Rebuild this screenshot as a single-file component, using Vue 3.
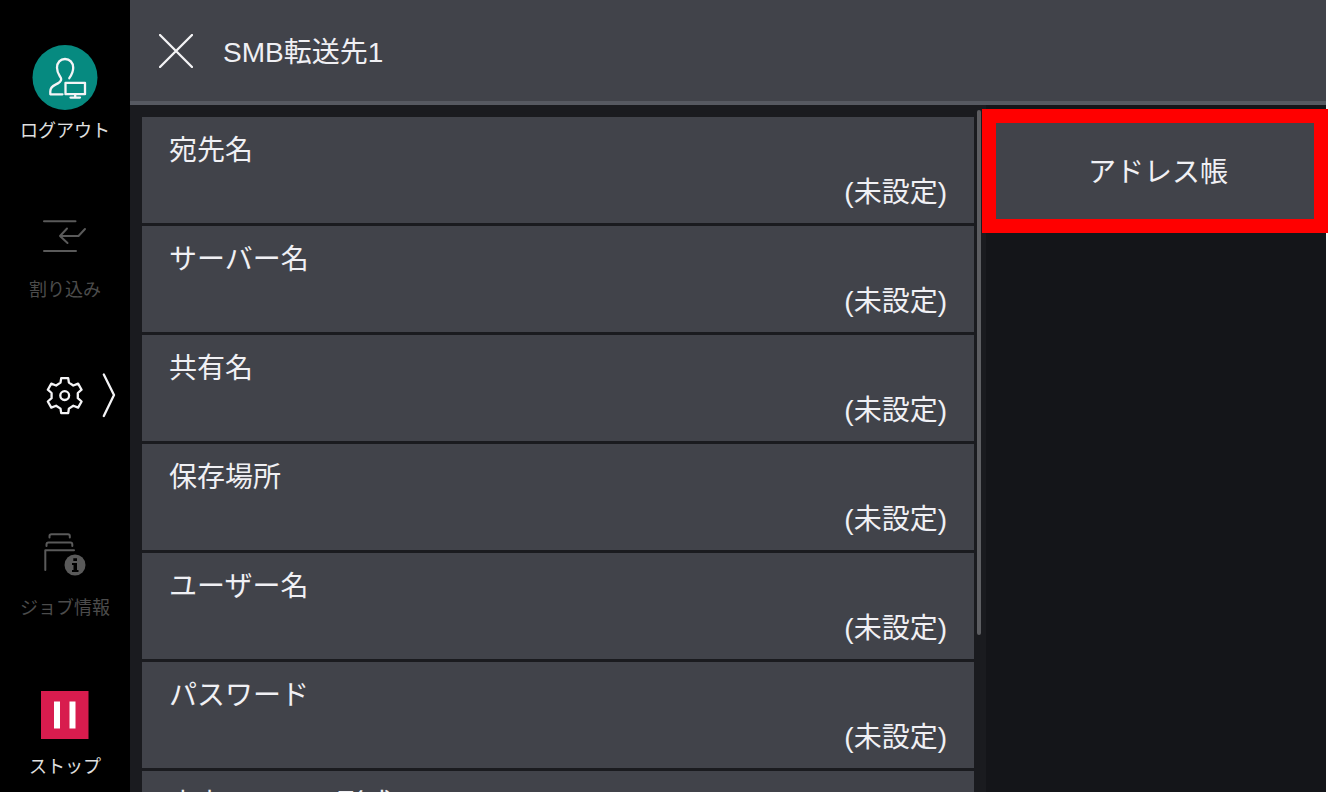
<template>
<div class="screen">
    <nav class="sidebar">
        <button class="side-btn">
            <svg class="side-icon" viewBox="0 0 130 66" aria-hidden="true">
                <circle cx="65" cy="33.5" r="32.5" fill="#068a80" />
                <g class="line bright">
                    <path d="M62.5 50.3H50.3V47.5C50.3 43.8 52 42.2 55.5 40.6C59 39 61.4 37.8 61.2 35C61 32.6 57 30.4 57 23.8C57 18.4 60.4 15 65 15S73.2 18.4 73.2 23.8C73.2 28 71.6 31 69.3 34.2" />
                    <path d="M65.5 38.8H85V50.2H65.5ZM75.2 50.2V53.4M70.5 53.6H80" />
                </g>
            </svg>
            <span>ログアウト</span>
        </button>
        <button class="side-btn" disabled>
            <svg class="side-icon" viewBox="0 0 130 66" aria-hidden="true">
                <path class="line" d="M44 18.3H75.5M44 48H76M85 26L78.5 33H60M67 25.5L60 33L67.5 40" />
            </svg>
            <span>割り込み</span>
        </button>
        <button class="side-btn" aria-label="設定">
            <svg class="side-icon" viewBox="0 0 130 66" aria-hidden="true">
                <g class="line bright" transform="translate(64.7 33.6)">
                    <path d="M-3.5-17.5H3.5L4.2-13L8.6-10.1L13.4-12L16.9-5.9L13.1-2.6V2.6L16.9 5.9L13.4 12L8.6 10.1L4.2 13L3.5 17.5H-3.5L-4.2 13L-8.6 10.1L-13.4 12L-16.9 5.9L-13.1 2.6V-2.6L-16.9-5.9L-13.4-12L-8.6-10.1L-4.2-13Z" />
                    <circle r="4.4" />
                </g>
                <path class="line bright" d="M103.8 12.5L114 33L103.8 54" />
            </svg>
        </button>
        <button class="side-btn" disabled>
            <svg class="side-icon" viewBox="0 0 130 66" aria-hidden="true">
                <path class="line" d="M49.5 16.5V15Q49.5 13.2 51.5 13.2H68Q69.8 13.2 69.8 15V16.5M46.5 25V23.4Q46.5 21.5 48.5 21.5H70.5Q72.3 21.5 72.3 23.4V25M45.3 49V29.2H74" />
                <circle cx="75" cy="44" r="10.5" fill="#5a5a5a" />
                <path d="M73.3 37.2H77V40H73.3ZM72 42H77V49H78.5V51H72V49H73.5V44H72Z" fill="#000" />
            </svg>
            <span>ジョブ情報</span>
        </button>
        <button class="side-btn">
            <svg class="side-icon" viewBox="0 0 130 66" aria-hidden="true">
                <rect x="41" y="11" width="47.5" height="48" fill="#d81c4e" />
                <path d="M54 21.5H60V48.5H54ZM69.5 21.5H75.5V48.5H69.5Z" fill="#fff" />
            </svg>
            <span>ストップ</span>
        </button>
    </nav>

    <main class="main">
        <header class="header">
            <button class="close-btn" aria-label="閉じる">
                <svg viewBox="0 0 34 34" aria-hidden="true">
                    <path class="line bright" d="M1 1L33 33M33 1L1 33" />
                </svg>
            </button>
            <h1 class="title">SMB転送先1</h1>
        </header>

        <div class="body">
            <section class="list-panel">
                <div class="list">
                    <button v-for="item in items" :key="item.label" class="row">
                        <span>{{ item.label }}</span>
                        <span class="value">{{ item.value }}</span>
                    </button>
                </div>
                <div class="scrollbar">
                    <div class="thumb"></div>
                </div>
            </section>

            <aside class="actions">
                <button class="action-btn">アドレス帳</button>
                <div class="highlight"></div>
            </aside>
        </div>
    </main>
</div>
</template>

<script setup>
import { ref } from 'vue';

const items = ref([
    { label: '宛先名', value: '(未設定)' },
    { label: 'サーバー名', value: '(未設定)' },
    { label: '共有名', value: '(未設定)' },
    { label: '保存場所', value: '(未設定)' },
    { label: 'ユーザー名', value: '(未設定)' },
    { label: 'パスワード', value: '(未設定)' },
    { label: '出力ファイル形式', value: '' }
]);
</script>

<style>
body {
    background: #fff;
}
</style>

<style scoped>
.screen {
    display: flex;
    height: 100vh;
    padding-right: 2px;
    box-sizing: border-box;
    overflow: hidden;
    font-family: "Liberation Sans", "Noto Sans CJK JP", sans-serif;
    font-size: 28px;
    line-height: 36px;
    color: #f0f0f4;
}

button {
    border: none;
    padding: 0;
    background: none;
    font: inherit;
    color: inherit;
    cursor: pointer;
}

.line {
    fill: none;
    stroke: #5a5a5a;
    stroke-width: 2;
    stroke-linecap: round;
    stroke-linejoin: round;
}

.bright {
    stroke: #f4f4f6;
    stroke-width: 2.3;
}

.sidebar {
    flex: 0 0 130px;
    display: flex;
    flex-direction: column;
    gap: 60px;
    padding-top: 44px;
    box-sizing: border-box;
    background: #000;
}

.side-btn {
    display: flex;
    flex-direction: column;
    align-items: center;
    gap: 9px;
    flex: 0 0 99px;
    font-size: 18px;
    line-height: 24px;
    color: #e0e0e0;
}

.side-btn:disabled {
    color: #4c4c4c;
    cursor: default;
}

.side-icon {
    display: block;
    width: 130px;
    height: 66px;
}

.main {
    flex: 1;
    min-width: 0;
    display: flex;
    flex-direction: column;
    background: #1a1b1f;
}

.header {
    flex: none;
    display: flex;
    align-items: center;
    gap: 30px;
    height: 105px;
    padding-left: 29px;
    box-sizing: border-box;
    background: #41434a;
    border-bottom: 4px solid #565961;
}

.close-btn {
    width: 34px;
    height: 34px;
}

.close-btn svg {
    display: block;
    width: 34px;
    height: 34px;
}

.title {
    margin: 0;
    padding-top: 4px;
    font-size: 28px;
    font-weight: 400;
}

.body {
    flex: 1;
    min-height: 0;
    display: flex;
}

.list-panel {
    flex: 1;
    min-width: 0;
    display: flex;
    gap: 3px;
    padding: 0 5px 0 12px;
}

.list {
    flex: 1;
    display: flex;
    flex-direction: column;
    gap: 3px;
    padding-top: 12px;
    overflow: hidden;
}

.row {
    flex: none;
    display: flex;
    flex-direction: column;
    gap: 6px;
    min-height: 106px;
    padding: 16px 27px 12px;
    box-sizing: border-box;
    background: #41434a;
    text-align: left;
}

.value {
    align-self: flex-end;
}

.scrollbar {
    width: 4px;
    padding-top: 5px;
}

.thumb {
    height: 77%;
    background: #5c5d61;
    border-radius: 2px;
}

.actions {
    position: relative;
    flex: 0 0 340px;
    padding: 12px 0 0 4px;
    box-sizing: border-box;
    background: #141519;
}

.action-btn {
    width: 100%;
    height: 106px;
    padding-top: 6px;
    background: #41434a;
}

/* red frame laid over the address book button */
.highlight {
    position: absolute;
    top: 4px;
    left: -4px;
    right: -2px;
    height: 124px;
    box-sizing: border-box;
    border: 14px solid #f00;
    pointer-events: none;
}
</style>
